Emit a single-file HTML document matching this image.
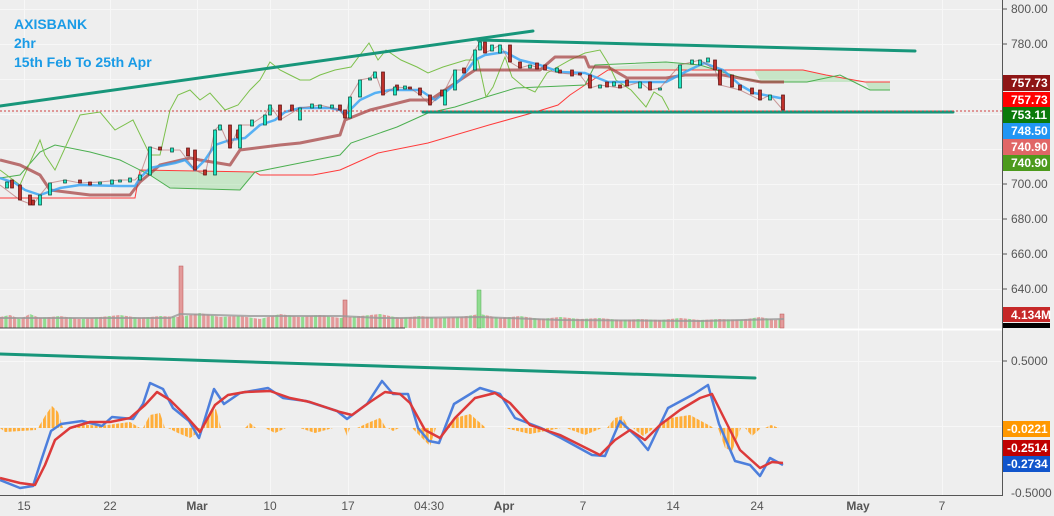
<!DOCTYPE html>
<html><head><meta charset="utf-8"><style>
html,body{margin:0;padding:0;background:#eeeeee;}
svg{display:block;font-family:"Liberation Sans",sans-serif;}
</style></head><body>
<svg width="1054" height="516" viewBox="0 0 1054 516" xmlns="http://www.w3.org/2000/svg">
<defs>
<pattern id="hist" width="4.3" height="10" patternUnits="userSpaceOnUse"><rect x="0" y="0" width="3" height="10" fill="#ffae3a"/></pattern>
<pattern id="volp" width="12.9" height="20" patternUnits="userSpaceOnUse"><rect x="0" y="0" width="3.3" height="20" fill="#e39a9a"/><rect x="4.3" y="0" width="3.3" height="20" fill="#90dc90"/><rect x="8.6" y="0" width="3.3" height="20" fill="#e39a9a"/></pattern>
</defs>
<rect width="1054" height="516" fill="#eeeeee"/>
<g stroke="#f7f7f7" stroke-width="1">
<line x1="0" y1="9.5" x2="1002" y2="9.5"/><line x1="0" y1="44.5" x2="1002" y2="44.5"/><line x1="0" y1="79.5" x2="1002" y2="79.5"/><line x1="0" y1="114.5" x2="1002" y2="114.5"/><line x1="0" y1="149.5" x2="1002" y2="149.5"/><line x1="0" y1="184.5" x2="1002" y2="184.5"/><line x1="0" y1="219.5" x2="1002" y2="219.5"/><line x1="0" y1="254.5" x2="1002" y2="254.5"/><line x1="0" y1="289.5" x2="1002" y2="289.5"/><line x1="0" y1="361.5" x2="1002" y2="361.5"/><line x1="0" y1="426.5" x2="1002" y2="426.5"/>
<line x1="24.5" y1="0" x2="24.5" y2="495"/><line x1="110.5" y1="0" x2="110.5" y2="495"/><line x1="197.5" y1="0" x2="197.5" y2="495"/><line x1="270.5" y1="0" x2="270.5" y2="495"/><line x1="348.5" y1="0" x2="348.5" y2="495"/><line x1="429.5" y1="0" x2="429.5" y2="495"/><line x1="504.5" y1="0" x2="504.5" y2="495"/><line x1="583.5" y1="0" x2="583.5" y2="495"/><line x1="673.5" y1="0" x2="673.5" y2="495"/><line x1="757.5" y1="0" x2="757.5" y2="495"/><line x1="858.5" y1="0" x2="858.5" y2="495"/><line x1="942.5" y1="0" x2="942.5" y2="495"/>
</g>
<polygon points="137,170 255,172 240,190 170,188 150,175" fill="rgba(110,210,110,0.3)"/>
<polygon points="754,70 803,70 826,75 865,82 807,82 761,82" fill="rgba(110,210,110,0.3)"/>
<polygon points="865,82 890,82 890,90 870,90" fill="rgba(110,210,110,0.3)"/>
<polygon points="600,68 666,62 700,65 715,70 608,70" fill="rgba(110,210,110,0.2)"/>
<polyline fill="none" stroke="#ff3b3b" stroke-width="1" points="0,198 135,198 140,170 255,172 260,175 313,175 340,170 378,153 428,143 489,125 532,113 558,105 570,95 585,85 608,70 803,70 826,75 865,82 890,82"/>
<polyline fill="none" stroke="#4caf50" stroke-width="1" points="0,178 20,175 40,152 55,145 90,152 120,160 150,175 170,188 240,190 255,172 290,165 340,155 351,143 397,127 428,113 455,107 486,97 516,88 539,87 585,85 595,65 666,62 700,65 742,78 761,82 807,82 840,75 860,85 870,90 890,90"/>
<polyline fill="none" stroke="#7cc04c" stroke-width="1" points="0,170 20,185 40,140 45,155 55,170 80,115 100,112 115,130 133,120 150,155 160,155 170,110 178,95 190,90 200,100 210,93 225,110 238,105 250,90 260,80 270,62 280,70 290,75 300,80 310,80 320,75 335,70 351,67 369,43 378,60 386,50 401,60 417,67 428,73 443,67 466,60 478,60 486,97 493,87 505,57 512,77 524,87 535,92 547,73 570,60 585,53 600,50 608,63 616,80 631,90 646,107 654,92 662,97 669,110"/>
<polyline fill="none" stroke="#a23a3a" stroke-width="3" opacity="0.7" stroke-linejoin="round" points="0,160 20,165 40,175 50,190 90,195 130,195 140,182 160,165 190,158 200,160 230,165 240,150 280,145 300,143 340,135 345,120 350,118 370,110 410,100 430,100 475,70 540,70 555,57 585,57 589,67 608,67 627,78 666,78 685,75 723,75 761,82 784,82"/>
<polyline fill="none" stroke="#3ba6f5" stroke-width="2.5" opacity="0.85" stroke-linejoin="round" points="0,178 15,183 25,190 40,195 60,188 80,185 120,186 135,186 140,178 150,168 175,163 185,160 195,170 205,160 215,145 230,140 245,138 260,125 275,120 285,112 300,108 330,108 340,110 345,115 360,100 375,93 390,90 420,90 435,100 448,90 460,80 475,60 485,55 505,52 520,60 540,65 560,72 585,73 608,82 666,82 685,72 704,63 723,70 740,85 754,93 780,98 784,98"/>
<polyline fill="none" stroke="#b06060" stroke-width="1" opacity="0.6" points="0,185 20,200 33,205 40,195 50,183 65,180 80,183 100,182 120,180 135,180 140,175 150,147 160,150 180,150 195,170 205,175 215,130 220,125 230,148 240,125 250,125 265,115 270,105 280,120 300,108 320,105 340,110 345,118 350,97 360,80 370,78 375,72 383,95 395,87 410,88 420,95 430,105 445,90 455,70 465,70 475,50 480,42 485,53 500,45 510,62 520,68 530,65 545,70 560,73 580,75 590,88 600,85 620,88 640,82 650,90 660,88 680,65 700,60 715,70 720,85 740,90 760,100 770,95 783,110"/>
<path fill="#c0302a" stroke="#5a1010" stroke-width="0.7" d="M18.5 185h3v15h-3zM31.5 200h3v5h-3zM78.5 180h3v3h-3zM158.5 147h3v3h-3zM193.5 150h3v20h-3zM203.5 170h3v5h-3zM228.5 125h3v23h-3zM278.5 105h3v15h-3zM338.5 105h3v5h-3zM343.5 110h3v8h-3zM381.5 72h3v23h-3zM408.5 87h3v2h-3zM418.5 88h3v7h-3zM428.5 95h3v10h-3zM483.5 42h3v11h-3zM508.5 45h3v17h-3zM518.5 62h3v6h-3zM543.5 65h3v5h-3zM558.5 70h3v3h-3zM578.5 73h3v2h-3zM588.5 75h3v13h-3zM618.5 85h3v3h-3zM648.5 82h3v8h-3zM713.5 60h3v10h-3zM718.5 70h3v15h-3zM738.5 85h3v5h-3zM758.5 90h3v10h-3zM781.5 95h3v15h-3zM10.5 180h3v8h-3zM28.5 195h3v10h-3zM88.5 182h3v3h-3zM186.5 148h3v8h-3zM236.5 130h3v8h-3zM290.5 105h3v6h-3zM395.5 85h3v5h-3zM440.5 90h3v6h-3zM462.5 68h3v5h-3zM535.5 63h3v6h-3zM570.5 70h3v6h-3zM605.5 82h3v5h-3zM625.5 80h3v6h-3zM730.5 75h3v12h-3zM750.5 88h3v6h-3z"/>
<path fill="#1de9c6" stroke="#0b4a3a" stroke-width="0.7" d="M38.5 195h3v10h-3zM48.5 183h3v12h-3zM63.5 180h3v3h-3zM98.5 182h3v2h-3zM118.5 180h3v2h-3zM138.5 175h3v5h-3zM148.5 147h3v28h-3zM213.5 130h3v45h-3zM218.5 125h3v5h-3zM238.5 125h3v23h-3zM263.5 115h3v10h-3zM268.5 105h3v10h-3zM298.5 108h3v12h-3zM318.5 105h3v3h-3zM348.5 97h3v21h-3zM358.5 80h3v17h-3zM368.5 78h3v2h-3zM373.5 72h3v6h-3zM393.5 87h3v8h-3zM443.5 90h3v15h-3zM453.5 70h3v20h-3zM473.5 50h3v20h-3zM478.5 42h3v8h-3zM498.5 45h3v8h-3zM528.5 65h3v3h-3zM598.5 85h3v3h-3zM638.5 82h3v6h-3zM658.5 88h3v2h-3zM678.5 65h3v23h-3zM698.5 60h3v5h-3zM768.5 95h3v5h-3zM5.5 182h3v6h-3zM110.5 180h3v4h-3zM128.5 178h3v4h-3zM170.5 148h3v4h-3zM250.5 120h3v6h-3zM310.5 104h3v4h-3zM330.5 105h3v3h-3zM403.5 86h3v3h-3zM490.5 45h3v6h-3zM555.5 68h3v4h-3zM612.5 82h3v4h-3zM690.5 60h3v4h-3zM706.5 58h3v4h-3z"/>
<polygon fill="url(#volp)" points="0,317 10,315 20,319 30,314 40,318 60,316 80,319 100,317 120,315 140,318 160,316 180,317 200,313 220,317 240,316 260,319 280,314 300,317 320,315 340,318 360,316 380,314 400,318 420,316 440,318 460,317 480,314 500,318 520,316 540,319 560,317 580,319 600,318 620,320 640,319 660,320 680,318 700,320 720,319 740,320 760,317 775,320 784,319 784,328 0,328"/>
<rect x="179" y="266" width="4" height="62" fill="#e39a9a" stroke="#b55" stroke-width="0.5"/>
<rect x="343" y="300" width="4" height="28" fill="#e39a9a" stroke="#b55" stroke-width="0.5"/>
<rect x="477" y="290" width="4" height="38" fill="#90dc90" stroke="#5a5" stroke-width="0.5"/>
<rect x="780" y="314" width="4" height="14" fill="#e39a9a" stroke="#b55" stroke-width="0.5"/>
<polyline fill="none" stroke="#999" stroke-width="2" opacity="0.8" points="0,318 170,318 180,314 250,316 340,316 380,318 400,318 480,317 560,320 700,321 784,319"/>
<path fill="url(#hist)" d="M38 428L45 416L52 406L58 412L63 428zM70 428L80 424L100 426L130 422L140 428zM143 428L150 415L160 413L165 428zM168 428L178 433L190 438L199 432L200 428zM204 428L210 412L216 409L221 428zM245 428L250 423L256 428zM265 428L275 433L286 428zM300 428L315 433L333 428zM344 428L347 436L350 428zM357 428L370 422L380 418L386 428zM388 428L393 431L399 428zM412 428L422 438L430 446L436 428zM444 428L455 418L470 414L486 428zM505 428L530 434L561 428zM566 428L585 435L602 428zM607 428L615 418L622 416L629 428zM633 428L643 436L654 428zM658 428L670 418L690 415L714 428zM718 428L725 448L732 451L741 428zM745 428L752 436L761 428zM765 428L771 425L779 428zM0 428L5 432L36 430L36 428z"/>
<polyline fill="none" stroke="#4d7fdc" stroke-width="2.5" stroke-linejoin="round" points="0,480 20,488 33,486 41,461 51,431 61,424 82,421 102,426 112,417 133,419 143,404 150,383 163,389 173,408 189,421 199,438 214,389 224,404 240,393 268,388 283,398 306,401 337,411 347,419 367,404 382,381 393,394 408,394 418,428 429,441 439,443 454,404 480,388 500,394 515,418 541,428 561,438 592,455 605,456 620,421 638,438 648,450 668,408 694,394 708,385 719,424 735,461 750,465 760,476 770,458 783,465"/>
<polyline fill="none" stroke="#dc3a3a" stroke-width="2.5" stroke-linejoin="round" points="0,478 20,483 35,485 45,465 55,440 70,428 90,422 110,422 130,418 145,405 157,392 170,400 185,415 200,432 215,405 228,395 245,392 270,391 290,398 310,402 340,412 352,415 370,402 385,392 400,394 410,403 425,430 440,438 455,418 475,398 495,393 510,403 530,425 560,435 600,455 615,440 630,430 645,440 660,425 680,410 700,398 712,394 725,420 740,450 760,468 772,462 783,463"/>
<line x1="0" y1="329.5" x2="1002" y2="329.5" stroke="#ffffff" stroke-width="2"/>
<line x1="0" y1="328" x2="405" y2="328" stroke="#444" stroke-width="1"/>
<line x1="0" y1="495.5" x2="1003" y2="495.5" stroke="#555" stroke-width="1"/>
<line x1="1002.5" y1="0" x2="1002.5" y2="496" stroke="#555" stroke-width="1"/>
<g stroke="#17967a" stroke-width="3" stroke-linecap="round">
<line x1="0" y1="106" x2="533" y2="31"/>
<line x1="478" y1="40" x2="915" y2="51"/>
<line x1="423" y1="112" x2="953" y2="112"/>
<line x1="0" y1="354" x2="755" y2="378"/>
</g>
<line x1="0" y1="111" x2="1002" y2="111" stroke="#d04040" stroke-width="1" stroke-dasharray="2,2"/>
<g fill="#1a9be6" font-weight="bold" font-size="14">
<text x="14" y="29">AXISBANK</text>
<text x="14" y="48">2hr</text>
<text x="14" y="67">15th Feb To 25th Apr</text>
</g>
<g fill="#555" font-size="12">
<text x="1011" y="13">800.00</text>
<text x="1011" y="48">780.00</text>
<text x="1011" y="188">700.00</text>
<text x="1011" y="223">680.00</text>
<text x="1011" y="258">660.00</text>
<text x="1011" y="293">640.00</text>
<text x="1011" y="365">0.5000</text>
<text x="1011" y="497">-0.5000</text>
</g>
<g stroke="#555"><line x1="1002" y1="9" x2="1007" y2="9"/><line x1="1002" y1="44" x2="1007" y2="44"/><line x1="1002" y1="184" x2="1007" y2="184"/><line x1="1002" y1="219" x2="1007" y2="219"/><line x1="1002" y1="254" x2="1007" y2="254"/><line x1="1002" y1="289" x2="1007" y2="289"/><line x1="1002" y1="361" x2="1007" y2="361"/></g>
<g font-size="12" font-weight="bold" fill="#fff">
<rect x="1003" y="75" width="47" height="16" fill="#8e1515"/><text x="1011" y="87">757.73</text>
<rect x="1003" y="92" width="47" height="16" fill="#ff0000"/><text x="1011" y="104">757.73</text>
<rect x="1003" y="107" width="47" height="16" fill="#0b7a0b"/><text x="1011" y="119">753.11</text>
<rect x="1003" y="123" width="47" height="16" fill="#2196f3"/><text x="1011" y="135">748.50</text>
<rect x="1003" y="139" width="47" height="16" fill="#e06666"/><text x="1011" y="151">740.90</text>
<rect x="1003" y="155" width="47" height="16" fill="#4c9a1c"/><text x="1011" y="167">740.90</text>
<rect x="1003" y="307" width="47" height="15" fill="#c62828"/><text x="1011" y="319">4.134M</text>
<rect x="1003" y="323" width="47" height="5" fill="#000"/>
<rect x="1003" y="421" width="47" height="16" fill="#ff9800"/><text x="1007" y="433">-0.0221</text>
<rect x="1003" y="440" width="47" height="16" fill="#c00000"/><text x="1007" y="452">-0.2514</text>
<rect x="1003" y="456" width="47" height="16" fill="#1155cc"/><text x="1007" y="468">-0.2734</text>
</g>
<g fill="#555" font-size="12" text-anchor="middle">
<text x="24" y="510">15</text><text x="110" y="510">22</text><text x="197" y="510" font-weight="bold">Mar</text>
<text x="270" y="510">10</text><text x="348" y="510">17</text><text x="429" y="510">04:30</text>
<text x="504" y="510" font-weight="bold">Apr</text><text x="583" y="510">7</text><text x="673" y="510">14</text>
<text x="757" y="510">24</text><text x="858" y="510" font-weight="bold">May</text><text x="942" y="510">7</text>
</g>
</svg>
</body></html>
